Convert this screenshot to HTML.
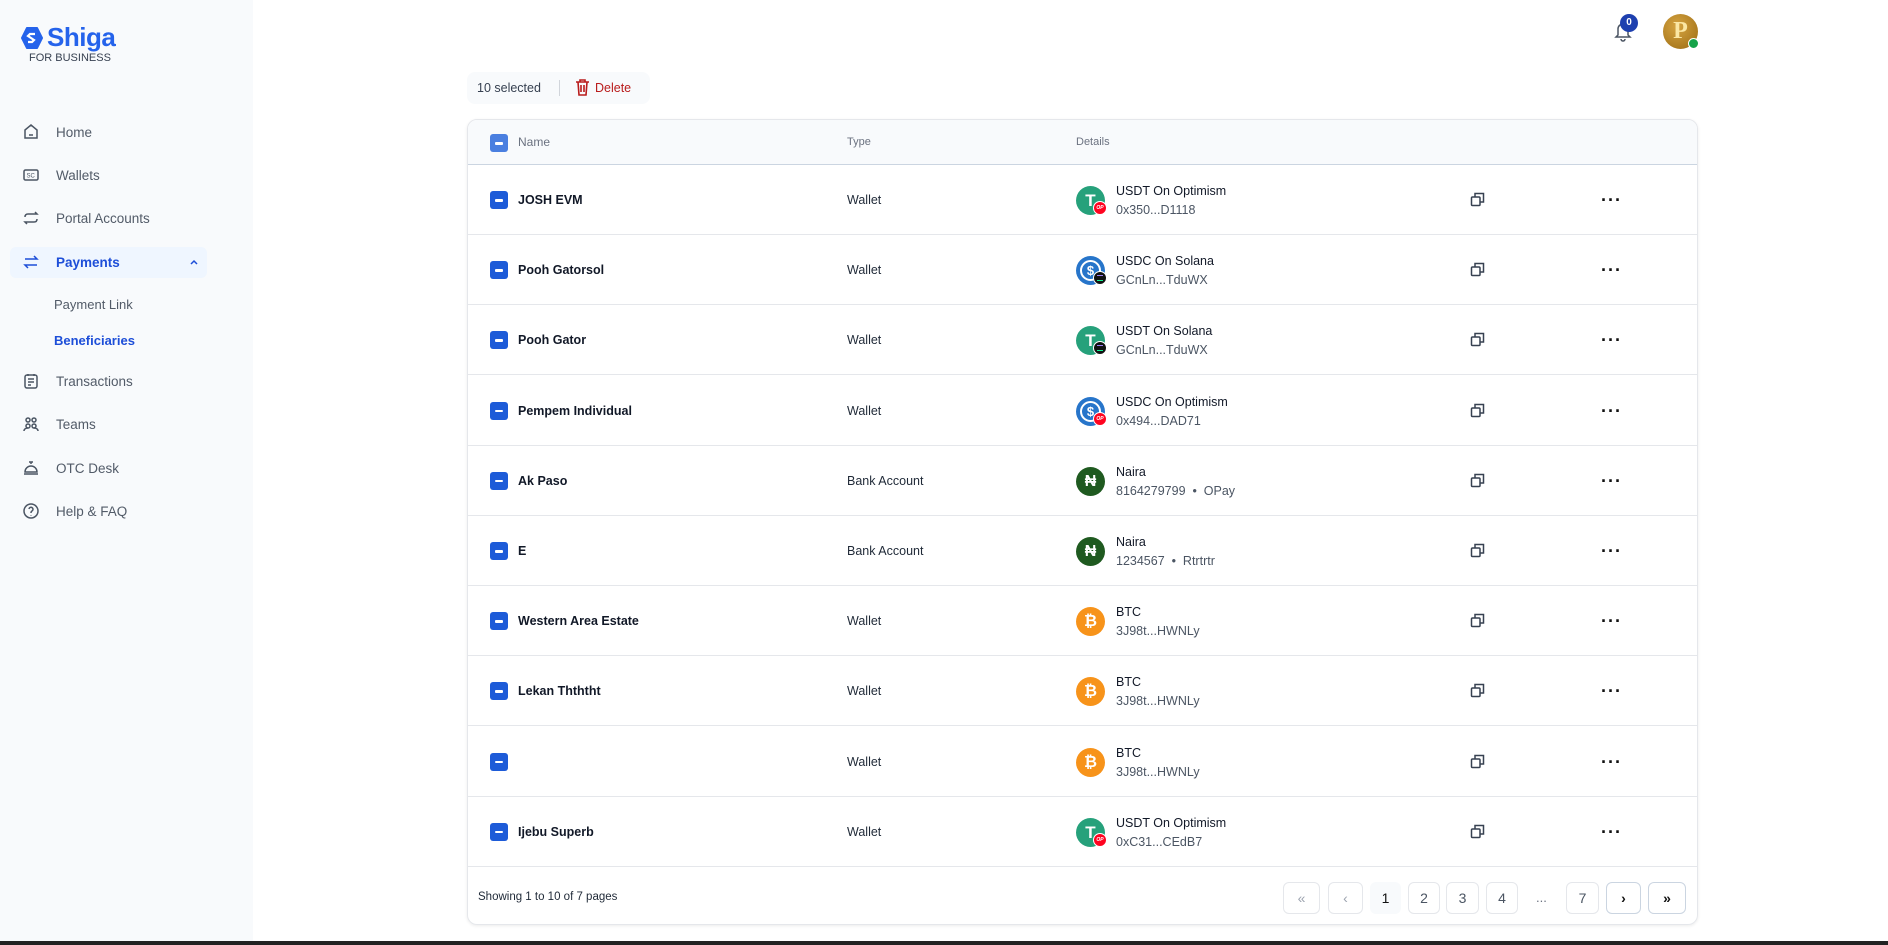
<!DOCTYPE html>
<html><head><meta charset="utf-8"><style>
*{box-sizing:border-box;margin:0;padding:0}
body{width:1888px;height:945px;background:#fff;font-family:"Liberation Sans",sans-serif;position:relative;overflow:hidden;color:#1f2937}
.side{position:absolute;left:0;top:0;width:253px;height:941px;background:#f8fafc}
.bottom{position:absolute;left:0;top:941px;width:1888px;height:4px;background:#222}
.nav{position:absolute;left:22px;font-size:13.5px;color:#525b68;display:flex;align-items:center}
.nav svg{width:18px;height:18px;margin-right:16px;stroke:#4b5563;fill:none;stroke-width:1.5}
.sub{position:absolute;left:54px;font-size:13px;color:#525b68}
.a{position:absolute}
.card{position:absolute;left:467px;top:119px;width:1231px;height:806px;border:1px solid #e5e7eb;border-radius:10px;box-shadow:0 1px 3px rgba(0,0,0,.08);overflow:hidden}
.hdr{position:absolute;left:0;top:0;width:100%;height:45px;background:#f8fafc;border-bottom:1px solid #cbd5e1;font-size:11px;color:#6b7280}
.row{position:absolute;left:0;width:100%;height:70px;border-bottom:1px solid #e5e7eb;font-size:12.5px}
.cb{position:absolute;left:22px;width:18px;height:18px;border-radius:3px;background:#1d5bd8}
.cb:after{content:"";position:absolute;left:5px;top:8px;width:8px;height:2.5px;background:#fff;border-radius:1px}
.nm{position:absolute;left:50px;font-weight:bold;color:#111827}
.tp{position:absolute;left:379px;color:#1f2937}
.ic{position:absolute;left:608px;width:29px;height:29px;border-radius:50%}
.t1{position:absolute;left:648px;color:#111827}
.t2{position:absolute;left:648px;color:#4b5563}
.cp{position:absolute;left:1002px}
.dots{position:absolute;left:1133px;font-size:18px;letter-spacing:1px;color:#111;font-weight:bold}
.pg{position:absolute;top:762px;height:32px;border:1px solid #e5e7eb;border-radius:6px;font-size:14px;color:#4b5563;display:flex;align-items:center;justify-content:center}
</style></head><body>
<div class="side">
  <svg class="a" style="left:21px;top:27px" width="22" height="22" viewBox="0 0 22 22"><path d="M6 1h10l5 10-5 10H6L1 11z" fill="#2563eb" stroke="#2563eb" stroke-width="2" stroke-linejoin="round"/><path d="M14 7H9l-2 2 6 4-2 2H7" stroke="#fff" stroke-width="2.2" fill="none"/></svg>
  <div class="a" style="left:47px;top:22px;font-size:26px;font-weight:bold;color:#2563eb;letter-spacing:-0.5px">Shiga</div>
  <div class="a" style="left:29px;top:52px;font-size:11px;color:#374151">FOR BUSINESS</div>

  <div class="nav" style="top:123px"><svg viewBox="0 0 18 18"><path d="M3 7l6-5 6 5v8H3z"/><path d="M7 12h4"/></svg>Home</div>
  <div class="nav" style="top:166px"><svg viewBox="0 0 18 18"><rect x="2" y="4" width="14" height="10" rx="1.5"/><text x="4.5" y="11.5" font-size="6" fill="#4b5563" stroke="none">SC</text></svg>Wallets</div>
  <div class="nav" style="top:209px"><svg viewBox="0 0 18 18"><path d="M3 8c0-2 1-3 3-3h9l-2-2M15 10c0 2-1 3-3 3H3l2 2"/></svg>Portal Accounts</div>
  <div class="a" style="left:10px;top:247px;width:197px;height:31px;background:#eff6ff;border-radius:6px"></div>
  <div class="nav" style="top:253px;color:#1d4ed8;font-weight:bold"><svg viewBox="0 0 18 18" style="stroke:#1d4ed8"><path d="M3 6h12l-3-3M15 12H3l3 3"/></svg>Payments</div>
  <svg class="a" style="left:189px;top:258px" width="10" height="8" viewBox="0 0 10 8"><path d="M2 6l3-3 3 3" stroke="#1d4ed8" stroke-width="1.5" fill="none"/></svg>
  <div class="sub" style="top:297px">Payment Link</div>
  <div class="sub" style="top:333px;color:#1d4ed8;font-weight:bold">Beneficiaries</div>
  <div class="nav" style="top:372px"><svg viewBox="0 0 18 18"><rect x="3" y="3" width="12" height="13" rx="2"/><path d="M6 7h6M6 10h6M6 13h3M6 2v2M12 2v2"/></svg>Transactions</div>
  <div class="nav" style="top:415px"><svg viewBox="0 0 18 18"><circle cx="6" cy="5" r="2"/><circle cx="12" cy="5" r="2"/><circle cx="6" cy="11" r="2"/><circle cx="12" cy="11" r="2"/><path d="M2 16c0-2 2-3 4-3M16 16c0-2-2-3-4-3"/></svg>Teams</div>
  <div class="nav" style="top:459px"><svg viewBox="0 0 18 18"><path d="M3 13a6 6 0 0112 0zM2 15h14M9 5V3M7 3h4"/></svg>OTC Desk</div>
  <div class="nav" style="top:502px"><svg viewBox="0 0 18 18"><circle cx="9" cy="9" r="7"/><path d="M7 7a2 2 0 113 2c-1 .5-1 1-1 2M9 13v.5"/></svg>Help &amp; FAQ</div>
</div>
<div class="bottom"></div>

<svg class="a" style="left:1613px;top:20px" width="20" height="22" viewBox="0 0 20 22"><path d="M5 15V9a5 5 0 0110 0v6l2 2H3zM8 19a2 2 0 004 0" stroke="#4b5563" stroke-width="1.5" fill="none"/></svg>
<div class="a" style="left:1620px;top:14px;width:18px;height:18px;border-radius:50%;background:#1e40af;color:#fff;font-size:10px;font-weight:bold;text-align:center;line-height:18px">0</div>
<div class="a" style="left:1663px;top:14px;width:35px;height:35px;border-radius:50%;background:radial-gradient(circle at 40% 35%,#d6a441,#9a6a12);color:#fbe7a4;font-family:'Liberation Serif',serif;font-size:24px;font-weight:bold;text-align:center;line-height:35px">P</div>
<div class="a" style="left:1688px;top:38px;width:11px;height:11px;border-radius:50%;background:#16a34a;border:1.5px solid #fff"></div>

<div class="a" style="left:467px;top:72px;width:183px;height:32px;background:#f8fafc;border-radius:8px"></div>
<div class="a" style="left:477px;top:81px;font-size:12.5px;color:#374151">10 selected</div>
<div class="a" style="left:559px;top:80px;width:1px;height:16px;background:#d1d5db"></div>
<svg class="a" style="left:575px;top:79px" width="15" height="17" viewBox="0 0 15 17"><path d="M1 3h13M5 3V1h5v2M3 3l1 13h7l1-13M6 6v7M9 6v7" stroke="#b91c1c" stroke-width="1.6" fill="none"/></svg>
<div class="a" style="left:595px;top:81px;font-size:12.5px;color:#b91c1c">Delete</div>

<div class="card">
  <div class="hdr">
    <div class="cb" style="top:14px;background:#4a7fe0"></div>
    <div class="a" style="left:50px;top:15px;font-size:12px">Name</div>
    <div class="a" style="left:379px;top:16px">Type</div>
    <div class="a" style="left:608px;top:16px">Details</div>
  </div>
  <div id="rows"></div>
  <div class="a" style="left:10px;top:771px;font-size:11.5px;color:#1f2937">Showing 1 to 10 of 7 pages</div>
  <div class="pg" style="left:815px;width:37px;color:#9ca3af">«</div>
  <div class="pg" style="left:860px;width:35px;color:#9ca3af">‹</div>
  <div class="pg" style="left:902px;width:31px;background:#f8fafc;border-color:#f8fafc;color:#111">1</div>
  <div class="pg" style="left:940px;width:32px">2</div>
  <div class="pg" style="left:978px;width:33px">3</div>
  <div class="pg" style="left:1018px;width:32px">4</div>
  <div class="a" style="left:1068px;top:770px;font-size:13px;color:#6b7280">...</div>
  <div class="pg" style="left:1098px;width:33px">7</div>
  <div class="pg" style="left:1138px;width:35px;border-color:#cbd5e1;color:#111;font-weight:bold">›</div>
  <div class="pg" style="left:1180px;width:38px;border-color:#cbd5e1;color:#111;font-weight:bold">»</div>
</div>

<script>
var d=[
["JOSH EVM","Wallet","usdt","op","USDT On Optimism","0x350...D1118"],
["Pooh Gatorsol","Wallet","usdc","sol","USDC On Solana","GCnLn...TduWX"],
["Pooh Gator","Wallet","usdt","sol","USDT On Solana","GCnLn...TduWX"],
["Pempem Individual","Wallet","usdc","op","USDC On Optimism","0x494...DAD71"],
["Ak Paso","Bank Account","ngn","","Naira","8164279799 &nbsp;•&nbsp; OPay"],
["E","Bank Account","ngn","","Naira","1234567 &nbsp;•&nbsp; Rtrtrtr"],
["Western Area Estate","Wallet","btc","","BTC","3J98t...HWNLy"],
["Lekan Thththt","Wallet","btc","","BTC","3J98t...HWNLy"],
["","Wallet","btc","","BTC","3J98t...HWNLy"],
["Ijebu Superb","Wallet","usdt","op","USDT On Optimism","0xC31...CEdB7"]];
var h="";
d.forEach(function(r,i){
 var top=45+i*70.2;
 var ic="";
 if(r[2]=="usdt")ic='<div class="ic" style="top:21px;background:#26a17b;color:#fff;font-weight:bold;font-size:17px;text-align:center;line-height:29px">T</div>';
 if(r[2]=="usdc")ic='<div class="ic" style="top:21px;background:#2775ca;"><div style="position:absolute;left:4px;top:4px;width:21px;height:21px;border-radius:50%;border:2px solid #fff;color:#fff;font-size:13px;font-weight:bold;text-align:center;line-height:17px">$</div></div>';
 if(r[2]=="ngn")ic='<div class="ic" style="top:21px;background:#1f5a20;color:#fff;font-weight:bold;font-size:16px;text-align:center;line-height:29px">₦</div>';
 if(r[2]=="btc")ic='<div class="ic" style="top:21px;background:#f7931a;color:#fff;font-weight:bold;font-size:16px;text-align:center;line-height:29px">₿</div>';
 if(r[3]=="op")ic+='<div class="a" style="left:625px;top:36px;width:14px;height:14px;border-radius:50%;background:#ff0420;border:1px solid #fff;color:#fff;font-size:5px;text-align:center;line-height:12px;font-style:italic;font-weight:bold">OP</div>';
 if(r[3]=="sol")ic+='<div class="a" style="left:625px;top:36px;width:14px;height:14px;border-radius:50%;background:#111;border:1px solid #fff"><div style="margin:3px 3px;height:6px;border-top:1.5px solid #9b7cf5;border-bottom:1.5px solid #14f195"></div></div>';
 h+='<div class="row" style="top:'+top+'px">'+
 '<div class="cb" style="top:26px"></div>'+
 '<div class="nm" style="top:28px">'+r[0]+'</div>'+
 '<div class="tp" style="top:28px">'+r[1]+'</div>'+ic+
 '<div class="t1" style="top:19px">'+r[4]+'</div>'+
 '<div class="t2" style="top:38px">'+r[5]+'</div>'+
 '<svg class="cp" style="top:27px" width="15" height="15" viewBox="0 0 15 15"><rect x="1.5" y="5" width="8.5" height="8.5" rx="1" fill="none" stroke="#374151" stroke-width="1.5"/><path d="M5 5V1.5h8.5V10H10" fill="none" stroke="#374151" stroke-width="1.5"/></svg>'+
 '<div class="dots" style="top:25px">···</div></div>';
});
document.getElementById("rows").innerHTML=h;
</script>
</body></html>
